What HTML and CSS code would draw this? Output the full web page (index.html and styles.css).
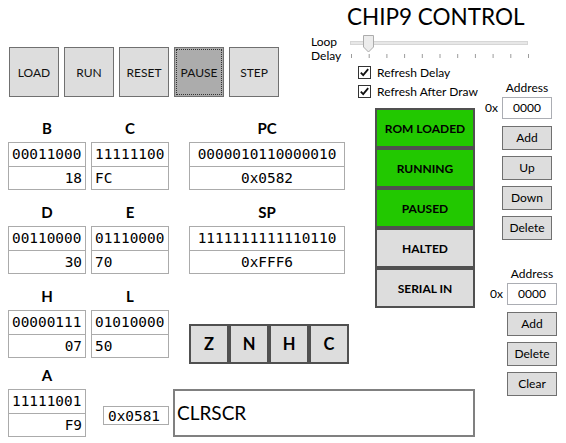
FILE: index.html
```html
<!DOCTYPE html>
<html>
<head>
<meta charset="utf-8">
<title>CHIP9 CONTROL</title>
<link rel="stylesheet" href="styles.css">
</head>
<body>
<div class="app">
  <div class="left">
    <div class="toolbar">
      <div class="tb">LOAD</div>
      <div class="tb">RUN</div>
      <div class="tb">RESET</div>
      <div class="tb tb-active">PAUSE</div>
      <div class="tb">STEP</div>
    </div>
    <div class="regs">
      <div class="reg-row">
        <div class="reg"><div class="reg-name">B</div><div class="reg-box"><div class="bin">00011000</div><div class="val al-r">18</div></div></div>
        <div class="reg reg-gap"><div class="reg-name">C</div><div class="reg-box"><div class="bin">11111100</div><div class="val">FC</div></div></div>
        <div class="reg reg-wide"><div class="reg-name">PC</div><div class="reg-box"><div class="bin al-c">0000010110000010</div><div class="val al-c">0x0582</div></div></div>
      </div>
      <div class="reg-row">
        <div class="reg"><div class="reg-name">D</div><div class="reg-box"><div class="bin">00110000</div><div class="val al-r">30</div></div></div>
        <div class="reg reg-gap"><div class="reg-name">E</div><div class="reg-box"><div class="bin">01110000</div><div class="val">70</div></div></div>
        <div class="reg reg-wide"><div class="reg-name">SP</div><div class="reg-box"><div class="bin al-c">1111111111110110</div><div class="val al-c">0xFFF6</div></div></div>
      </div>
      <div class="reg-row">
        <div class="reg"><div class="reg-name">H</div><div class="reg-box"><div class="bin">00000111</div><div class="val al-r">07</div></div></div>
        <div class="reg reg-gap"><div class="reg-name">L</div><div class="reg-box"><div class="bin">01010000</div><div class="val">50</div></div></div>
        <div class="flags">
          <div class="flag">Z</div>
          <div class="flag">N</div>
          <div class="flag">H</div>
          <div class="flag">C</div>
        </div>
      </div>
      <div class="reg-row reg-row-last">
        <div class="reg"><div class="reg-name">A</div><div class="reg-box"><div class="bin">11111001</div><div class="val al-r">F9</div></div></div>
        <div class="pcval">0x0581</div>
        <div class="cmd">CLRSCR</div>
      </div>
    </div>
  </div>

  <div class="right">
    <div class="title">CHIP9 CONTROL</div>
    <div class="slider-row">
      <div class="slider-label">Loop<br>Delay</div>
      <svg class="slider" width="180" height="24" viewBox="0 0 180 24">
        <rect x="0.5" y="6.5" width="177" height="3" fill="#e7e7e7" stroke="#d6d6d6"/>
        <g stroke="#9c9c9c" stroke-width="1">
          <line x1="1.5" y1="19" x2="1.5" y2="23"/>
          <line x1="19.2" y1="19" x2="19.2" y2="23"/>
          <line x1="36.9" y1="19" x2="36.9" y2="23"/>
          <line x1="54.6" y1="19" x2="54.6" y2="23"/>
          <line x1="72.3" y1="19" x2="72.3" y2="23"/>
          <line x1="90" y1="19" x2="90" y2="23"/>
          <line x1="107.7" y1="19" x2="107.7" y2="23"/>
          <line x1="125.4" y1="19" x2="125.4" y2="23"/>
          <line x1="143.1" y1="19" x2="143.1" y2="23"/>
          <line x1="160.8" y1="19" x2="160.8" y2="23"/>
          <line x1="178.5" y1="19" x2="178.5" y2="23"/>
        </g>
        <path d="M13.5 0.5 H23.5 V12 L18.5 17 L13.5 12 Z" fill="#ececec" stroke="#acacac"/>
      </svg>
    </div>
    <div class="check-row">
      <svg class="check" width="13" height="13" viewBox="0 0 13 13"><rect x="0.5" y="0.5" width="12" height="12" fill="#fff" stroke="#333"/><path d="M2.8 6.6 L5.2 9.2 L10.2 3.2" fill="none" stroke="#111" stroke-width="1.8"/></svg>
      <span>Refresh Delay</span>
    </div>
    <div class="lower">
      <div class="mid">
        <div class="check-row check-row-2">
          <svg class="check" width="13" height="13" viewBox="0 0 13 13"><rect x="0.5" y="0.5" width="12" height="12" fill="#fff" stroke="#333"/><path d="M2.8 6.6 L5.2 9.2 L10.2 3.2" fill="none" stroke="#111" stroke-width="1.8"/></svg>
          <span>Refresh After Draw</span>
        </div>
        <div class="status">
          <div class="st st-on">ROM LOADED</div>
          <div class="st st-on">RUNNING</div>
          <div class="st st-on">PAUSED</div>
          <div class="st">HALTED</div>
          <div class="st">SERIAL IN</div>
        </div>
      </div>
      <div class="addr-col">
        <div class="addr">
          <div class="addr-title">Address</div>
          <div class="addr-prefix">0x</div>
          <div class="addr-input">0000</div>
          <div class="addr-btns">
            <div class="sb">Add</div>
            <div class="sb">Up</div>
            <div class="sb">Down</div>
            <div class="sb">Delete</div>
          </div>
        </div>
        <div class="addr addr-2">
          <div class="addr-title">Address</div>
          <div class="addr-prefix">0x</div>
          <div class="addr-input">0000</div>
          <div class="addr-btns">
            <div class="sb">Add</div>
            <div class="sb">Delete</div>
            <div class="sb">Clear</div>
          </div>
        </div>
      </div>
    </div>
  </div>
</div>
</body>
</html>
```

FILE: styles.css
```css
html, body {
  margin: 0;
  padding: 0;
}

body {
  width: 566px;
  height: 443px;
  overflow: hidden;
  background: #ffffff;
  font-family: Lato, "Open Sans", sans-serif;
  font-size: 12px;
  color: #000;
}

.app {
  display: flex;
  width: 566px;
  height: 443px;
}

/* ---------- left side ---------- */

.left {
  width: 311px;
  flex: none;
  box-sizing: border-box;
  padding-left: 8px;
}

.toolbar {
  display: flex;
  gap: 5px;
  margin-top: 47px;
  margin-left: 1px;
}

.tb {
  width: 50px;
  height: 50px;
  box-sizing: border-box;
  flex: none;
  border: 1px solid #707070;
  background: #dddddd;
  display: flex;
  align-items: center;
  justify-content: center;
  font-size: 12px;
  color: #111;
}

.tb-active {
  background: #acacac;
  outline: 1px dotted #333;
  outline-offset: -3px;
}

.regs {
  margin-top: 18px;
  display: flex;
  flex-direction: column;
  gap: 9px;
}

.reg-row {
  display: flex;
  align-items: flex-start;
}

.reg-row > * {
  flex-shrink: 0;
}

.reg-row-last {
  margin-top: -11px;
}

.reg {
  width: 78px;
  display: flex;
  flex-direction: column;
}

.reg-gap {
  margin-left: 5px;
}

.reg-wide {
  width: 156px;
  margin-left: 20px;
}

.reg-name {
  height: 26px;
  line-height: 26px;
  text-align: center;
  font-weight: 700;
  font-size: 15px;
}

.reg-box {
  margin-top: 1px;
  border: 1px solid #ababab;
  font-family: "DejaVu Sans Mono", "Liberation Mono", monospace;
  font-size: 14.4px;
  color: #000;
}

.bin {
  height: 23px;
  line-height: 23px;
  padding: 0 3px;
  border-bottom: 1px solid #ababab;
  white-space: nowrap;
}

.val {
  height: 22px;
  line-height: 22px;
  padding: 0 3px;
  white-space: nowrap;
}

.al-r { text-align: right; }
.al-c { text-align: center; }

.flags {
  display: flex;
  margin-left: 20px;
  margin-top: 41px;
}

.flag {
  width: 40px;
  height: 40px;
  box-sizing: border-box;
  border: 2px solid #505050;
  background: #dddddd;
  display: flex;
  align-items: center;
  justify-content: center;
  font-weight: 700;
  font-size: 16.5px;
}

.pcval {
  margin-left: 17px;
  margin-top: 44px;
  width: 66px;
  height: 19px;
  box-sizing: border-box;
  border: 1px solid #ababab;
  padding-left: 4px;
  font-family: "DejaVu Sans Mono", "Liberation Mono", monospace;
  font-size: 14.4px;
  line-height: 19px;
}

.cmd {
  margin-left: 4px;
  margin-top: 27px;
  width: 302px;
  height: 48px;
  box-sizing: border-box;
  border: 2px solid #808080;
  padding-left: 2px;
  font-size: 19px;
  line-height: 44px;
}

/* ---------- right side ---------- */

.right {
  width: 255px;
  flex: none;
  display: flex;
  flex-direction: column;
}

.title {
  margin-left: 36px;
  padding-top: 2px;
  height: 30px;
  line-height: 30px;
  font-size: 22.5px;
  white-space: nowrap;
}

.slider-row {
  display: flex;
  margin-top: 3px;
}

.slider-label {
  width: 39px;
  line-height: 14px;
  font-size: 12px;
}

.slider {
  display: block;
}

.check-row {
  display: flex;
  align-items: center;
  gap: 6px;
  height: 16px;
  margin-top: 1px;
  margin-left: 47px;
  white-space: nowrap;
}

.check {
  display: block;
  flex: none;
}

.check-row-2 {
  margin-top: 3px;
}

.lower {
  display: flex;
}

.mid {
  width: 174px;
  flex: none;
}

.status {
  margin-left: 64px;
  margin-top: 9px;
  width: 100px;
  display: flex;
  flex-direction: column;
}

.st {
  height: 40px;
  box-sizing: border-box;
  border: 2px solid #505050;
  background: #dddddd;
  display: flex;
  align-items: center;
  justify-content: center;
  font-weight: 700;
  font-size: 12px;
}

.st-on {
  background: #22c800;
}

.addr-col {
  display: flex;
  flex-direction: column;
}

.addr {
  display: grid;
  grid-template-columns: 12px 50px;
  column-gap: 5px;
}

.addr-2 {
  margin-left: 5px;
  margin-top: 26px;
}

.addr-title {
  grid-column: 2;
  height: 16px;
  line-height: 16px;
  text-align: center;
  white-space: nowrap;
}

.addr-prefix {
  grid-column: 1;
  align-self: center;
  white-space: nowrap;
}

.addr-input {
  grid-column: 2;
  margin-top: 1px;
  height: 22px;
  box-sizing: border-box;
  border: 1px solid #abadb3;
  background: #fff;
  text-align: center;
  line-height: 20px;
}

.addr-btns {
  grid-column: 2;
  display: flex;
  flex-direction: column;
  gap: 6px;
  margin-top: 7px;
}

.sb {
  height: 24px;
  box-sizing: border-box;
  border: 1px solid #707070;
  background: #dddddd;
  text-align: center;
  line-height: 22px;
}
```
